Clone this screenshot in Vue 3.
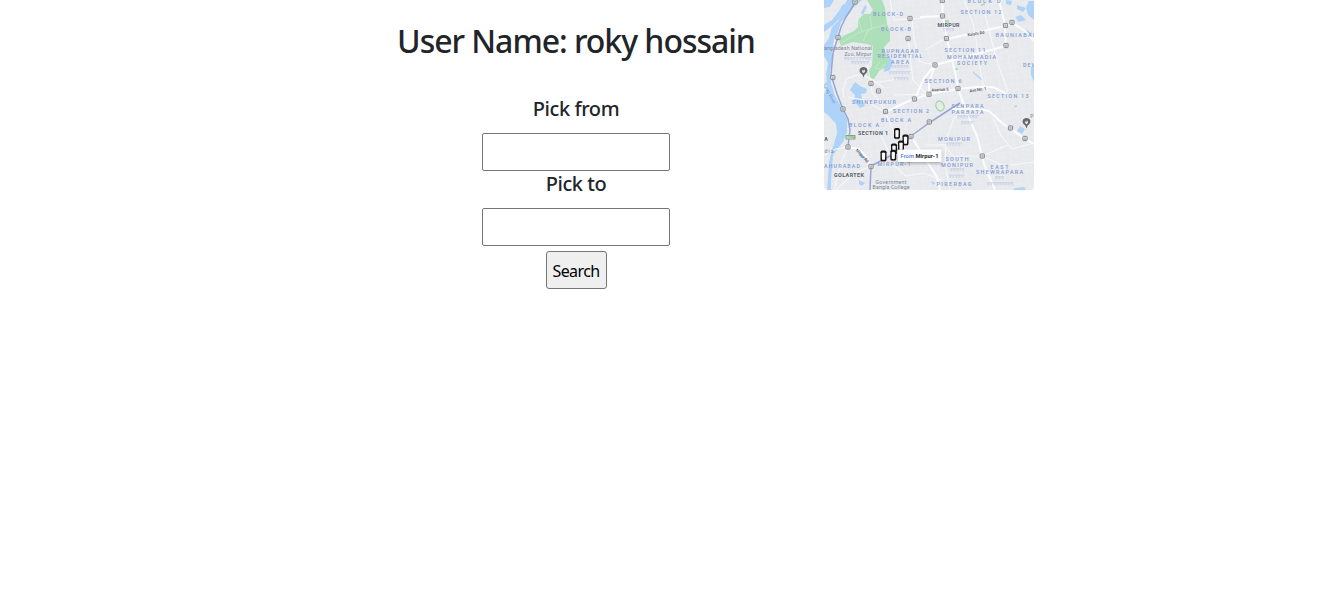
<script setup>
import { ref } from 'vue'

const userName = ref('roky hossain')
const from = ref('')
const to = ref('')

// Area names: [text, centre x, baseline y, width]
const areas = [
  ['BLOCK-D', 64, 16, 30], ['BLOCK-B', 72, 31, 30],
  ['RUPNAGAR', 76, 52.5, 37], ['RESIDENTIAL', 76, 58.3, 45], ['AREA', 76, 64, 18],
  ['BLOCK D', 160, 3, 33], ['SECTION 12', 157, 14.3, 41],
  ['BAUNIABAD', 192, 37, 41], ['SECTION 11', 141, 52.3, 41],
  ['MOHAMMADIA', 147.5, 59.2, 49], ['SOCIETY', 148, 64.5, 30],
  ['DEV', 205, 67, 12], ['SECTION 6', 119, 82.8, 37], ['SECTION 13', 184, 98, 41],
  ['SHINEPUKUR', 50, 104, 44], ['SECTION 2', 87, 113, 36],
  ['BLOCK A', 40, 126.5, 30], ['BLOCK A', 72, 122.3, 30],
  ['SENPARA', 143.5, 108, 32], ['PARBATA', 143.5, 113.6, 32],
  ['MONIPUR', 130, 140.7, 32], ['SOUTH', 133, 161, 23], ['MONIPUR', 133, 166.8, 32],
  ['EAST', 175.5, 169, 18], ['SHEWRAPARA', 175.5, 174.4, 47],
  ['PIRERBAG', 130, 186.2, 35], ['AHURABAD', 18, 168, 36], ['MIRPUR-1', 70, 166, 33]
]

// Road shield markers
const markers = [
  [31, 2], [14, 37.5], [8.8, 77.5], [86, 18.5], [84, 38.5], [47, 83.5], [54.5, 91],
  [90.5, 99], [118.3, 0.5], [118.5, 16], [122.5, 38.5], [181.5, 25.5], [188, 22.5],
  [182, 45.5], [111, 65], [134, 88.5], [105, 94.2], [19, 109], [61.5, 111.5],
  [24, 147], [47, 166.5], [87, 136.5], [105.3, 122], [186.5, 128], [201, 138.5], [158.3, 156]
]

// Secondary scripts under the area names: [x, y, width]
const scripts = [
  [67, 67, 18], [65, 73, 22], [70, 79, 14], [20, 59, 28], [27, 63, 18],
  [119, 30, 11], [133, 117, 22], [137, 123, 13], [122, 144.5, 16],
  [126, 170, 14], [125, 176.5, 16], [171, 178, 9], [163, 184, 26]
]

const cars = [[73, 133.5], [81.5, 140], [70, 149], [77, 146], [59.5, 156], [69.3, 155.3]]

const glyphs = (x, y, w) => {
  let d = `M${x} ${y - 1.4}h${w}`
  for (let i = 0; i < w - 1; i += 3) {
    d += `M${x + i} ${y - 1.2}l1.3 1.3l-1 1.3M${x + i + 1.7} ${y - 1.4}v2.6`
  }
  return d
}
</script>

<template>
  <main class="page">
    <section class="booking">
      <h2>User Name: {{ userName }}</h2>
      <form @submit.prevent>
        <h5 class="label-from">Pick from</h5>
        <input v-model="from" type="text" aria-label="Pick from" />
        <h5 class="label-to">Pick to</h5>
        <input v-model="to" type="text" aria-label="Pick to" />
        <button type="submit">Search</button>
      </form>
    </section>

    <svg class="map" viewBox="0 0 210 190" role="img" aria-label="Map">
      <defs>
        <pattern id="lanes" width="13" height="11" patternUnits="userSpaceOnUse" patternTransform="rotate(-9)">
          <path d="M0 3H13M4 0V11M9 3V11M4 8H13" />
        </pattern>
        <filter id="shadow" x="-20%" y="-40%" width="140%" height="200%">
          <feDropShadow dx="0" dy="1.5" stdDeviation="1.8" flood-color="#444" flood-opacity=".4" />
        </filter>
      </defs>
      <rect width="210" height="190" fill="#e7e9ed" />
      <rect width="210" height="190" fill="url(#lanes)" />

      <!-- rivers and lakes -->
      <g class="water">
        <path d="M23 0H38L30 7L23 16L17 22L14 32L10 40L8 51L9 61L6 71L7 83L11 96L18 108L23 119L23 132L19 142L15 147L9 148L11 140L13 133L12 124L5 116L0 112V94L3 88L2 74L4 63L0 56V45L5 38L8 27L15 20L17 11Z" />
        <path d="M0 0H10L6 7L0 8ZM0 25L8 20L15 11L19 4L23 6L18 16L8 26L0 32Z" />
        <path d="M9 146L15 147L9 155L8 168L7 179L7 190H3L4 177L5 162Z" />
        <path d="M31 82L36 86L43 89L42 93L37 94L38 99L41 106L36 108L30 101L31 95L26 90Z" />
        <path d="M53 11L60 18L56 22L51 17ZM64 56L69 61L66 70L60 72L61 61ZM49 44L54 49L49 55ZM39 15L43 7L41 5L37 13Z" />
        <path d="M182 0L188 1L187 5L182 4ZM193 5L202 8L199 12L193 9ZM205 1H210V20L204 15L202 7ZM191 17L197 15L202 20L195 22ZM202 30L208 33L207 37L202 35Z" />
        <path d="M196 126L201 129L198 134L193 131ZM207 67L210 66V82L207 75ZM191 188L200 187L202 190H189ZM35 153L41 155L42 160L36 157ZM35 180L41 183L38 186L35 184ZM107 181L111 183L109 185Z" />
      </g>
      <path class="river-edge" d="M149 72L158 80" />

      <!-- parks -->
      <g class="park">
        <path d="M43 0H58L61 8L63 24L66 31L66 41L60 47L62 55L65 63L61 68L56 70L50 79L45 78L43 73L48 66L49 46L43 44L29 42L17 46L15 40L19 36L30 31L34 27L34 20L40 14L46 14L49 10L46 5Z" />
        <path d="M121 20h4v3h-4zM157 4l4-1v2l-4 1zM131 68h3v2h-3zM190 106l3-1v2h-3z" />
      </g>
      <path class="park-path" d="M17 43L34 33L43 30L61 25M46 16L48 28L44 31L39 41M34 19L38 31M56 62L51 68L57 69L61 64" />
      <ellipse class="ring" cx="116" cy="106" rx="4" ry="5" transform="rotate(-20 116 106)" />

      <!-- streets -->
      <g class="road minor">
        <path d="M66 0L70 20L88 19L90 38L96 62L111 65M88 19L118 16M84 38L89 80L103 94M118 16L119 0M20 50L31 58L42 60L47 83L75 79" />
        <path d="M0 155L12 149L24 147L18 160L10 190M22 79L19 90L20 98M22 79L33 75L44 77L60 88M70 95L105 94M61 112L56 102L48 92L47 84M61 112L72 137L87 136" />
        <path d="M101 50L122 38M140 0L149 23L152 40L155 62L159 84L174 102M160 11L168 42L176 70L184 91M134 89L143 110L130 118L122 140L121 165L126 190" />
        <path d="M101 145L120 145L129 156L158 156L184 145M169 119L178 137L188 149L210 143M158 156L180 166L210 162M61 112L40 100L24 97M47 166L29 174L12 190M71 166L82 176L100 173L119 181M55 130L65 153L82 155" />
      </g>
      <g class="road major">
        <path d="M118 0L119 17L123 39L132 76L134 89L142 111L153 136L160 164L171 190" />
        <path d="M175 0L181 25L182 46L111 65L105 83L105 94L134 89L153 87L169 87L183 94" />
        <path d="M123 39L181 26L190 24L201 31L210 41M96 17L119 16M128 109L153 109L165 111L178 123L187 129L201 139L210 144" />
        <path d="M111 65L100 78L91 99M61 112L85 101L105 94M87 136L102 160L113 177L116 190M24 147L35 149L43 158L47 166" />
      </g>
      <path class="route" d="M31 0L29 6L22 17L17 27L14 37L9 53L7 75L13 94L19 109L24 119L26 130L24 147M47 166L68 155L87 136L105 123L128 108L136 103M47 166L46 190" />

      <path v-for="(s, i) in scripts" :key="'s' + i" class="script" :d="glyphs(...s)" />
      <g v-for="(m, i) in markers" :key="'m' + i" :transform="`translate(${m[0]} ${m[1]})`">
        <rect x="-2.1" y="-2.1" width="4.2" height="4.2" rx=".5" class="marker" />
        <path d="M-1 -.4H1M-1 .8H1" class="marker-line" />
      </g>

      <text v-for="(a, i) in areas" :key="'a' + i" class="area" :x="a[1]" :y="a[2]" :textLength="a[3]">{{ a[0] }}</text>

      <g class="place">
        <text x="24" y="50" textLength="48">angladesh National</text>
        <text x="34" y="56" textLength="27">Zoo, Mirpur</text>
        <text x="67" y="184" textLength="31">Government</text>
        <text x="67" y="189.3" textLength="37">Bangla College</text>
        <text x="5" y="153" textLength="9">dia</text>
        <text x="4" y="94" transform="rotate(62 4 94)" class="river-name">Turag River</text>
      </g>
      <g class="district">
        <text x="124.5" y="27.3" textLength="22">MIRPUR</text>
        <text x="49" y="135.4" textLength="30">SECTION 1</text>
        <text x="25" y="177.2" textLength="30">GOLARTEK</text>
        <text x="2" y="141">A</text>
      </g>
      <g class="street">
        <text x="152" y="35" textLength="17" transform="rotate(-9 152 34)">Kalshi Rd</text>
        <text x="116" y="91" textLength="17" transform="rotate(-3 116 90)">Avenue 5</text>
        <text x="154" y="91" textLength="17" transform="rotate(-10 154 90)">Ave No. 1</text>
        <text x="38" y="157" textLength="17" transform="rotate(48 38 156)">Mirpur Rd</text>
      </g>
      <rect x="21.5" y="135" width="10" height="4.4" rx=".6" fill="#7fa780" />
      <text x="26.5" y="138.5" class="road-number">N501</text>

      <!-- place pins -->
      <g v-for="(p, i) in [[39.5, 71.2], [202.5, 122.3]]" :key="'p' + i" :transform="`translate(${p[0]} ${p[1]})`">
        <path d="M0 6.2L-1.2 3.3C-6 0-3.8-4.3 0-4.3S6 0 1.2 3.3Z" class="pin" />
        <path d="M-1.7-.6h.9v-.9h.7v.9h.8v-.9h.8v2.1L0 2-1.4.9Z" fill="#dfe1e4" />
      </g>

      <g v-for="(c, i) in cars" :key="'c' + i" :transform="`translate(${c[0]} ${c[1]})`">
        <path d="M-3.5-3.7l1 .5M3.5-3.7l-1 .5" stroke="#b9a5a5" stroke-width=".6" />
        <rect x="-3" y="-5.5" width="6" height="11" rx="1.8" fill="#151515" />
        <path d="M-1.7-2.9Q0-4.3 1.7-2.9L1.5 3.4Q0 4.3-1.5 3.4Z" fill="#fafafa" />
        <path d="M-2 5.5H2" stroke="#d78383" stroke-width=".6" />
      </g>
      <rect x="74" y="149.5" width="43.5" height="12.5" rx=".7" fill="#fff" filter="url(#shadow)" />
      <text class="tip" x="76.5" y="157.7" textLength="38"><tspan class="tip-from">From</tspan> Mirpur-1</text>
      <text class="place" x="208" y="118">P</text>
    </svg>
  </main>
</template>

<style>
body { background: #fff; }
</style>

<style scoped>
.page {
  display: flex;
  align-items: flex-start;
  padding-left: 328px;
  color: #212529;
  font-family: "Segoe UI", "Noto Sans", "Open Sans", sans-serif;
}
.booking {
  width: 496px;
  box-sizing: border-box;
  padding-top: 21px;
  text-align: center;
}
h2 {
  margin: 0;
  font-size: 32px;
  line-height: 39.4px;
  font-weight: 500;
  white-space: nowrap;
  letter-spacing: -1.03px;
}
form {
  display: flex;
  flex-direction: column;
  align-items: center;
  padding-top: 36.6px;
}
h5 {
  margin: 0 0 12px;
  font-size: 20px;
  line-height: 24px;
  font-weight: 500;
  letter-spacing: -0.42px;
}
.label-to { margin-top: 1px; }
input {
  box-sizing: border-box;
  width: 188px;
  height: 38px;
  border: 1px solid #767676;
  border-radius: 2px;
  padding: 1px 2px;
  font: 16px "Noto Sans", sans-serif;
}
button {
  box-sizing: border-box;
  width: 61px;
  height: 38px;
  margin-top: 5px;
  padding: 1px 0 0;
  border: 1px solid #767676;
  border-radius: 3px;
  background: #efefef;
  color: #000;
  font: 16px "Noto Sans", sans-serif;
  letter-spacing: -0.6px;
}
.map {
  display: block;
  width: 210px;
  height: 190px;
  border-radius: 0 0 4px 4px;
  font-family: Roboto, sans-serif;
}
#lanes path { fill: none; stroke: #eeeff2; stroke-width: .6; }
.water { fill: #aed3f8; }
.river-edge { fill: none; stroke: #b4d2f4; stroke-width: 1.3; }
.river-name { font-size: 4.6px; fill: #7196cc; }
.park { fill: #addfb8; }
.park-path { fill: none; stroke: #cbebd1; stroke-width: .8; }
.ring { fill: none; stroke: #a5dab0; stroke-width: 1.5; }
.road { fill: none; stroke-linejoin: round; }
.minor { stroke: #f6f7f9; stroke-width: 1.1; }
.major { stroke: #fbfcfd; stroke-width: 2; }
.route { fill: none; stroke: #98a6d2; stroke-width: 1.5; stroke-linejoin: round; }
.script { fill: none; stroke: #b3c3e2; stroke-width: .45; }
.marker { fill: #e4e5e7; stroke: #7e8085; stroke-width: .9; }
.marker-line { stroke: #888; stroke-width: .6; }
.area { font-size: 5.4px; font-weight: 500; fill: #829bd4; text-anchor: middle; }
.place { font-size: 5.2px; fill: #7d8592; text-anchor: middle; }
.place .river-name { font-size: 4.6px; fill: #7196cc; }
.district { font-size: 5.4px; font-weight: 700; fill: #59616d; text-anchor: middle; }
.street { font-size: 4.2px; font-weight: 500; fill: #54585e; text-anchor: middle; }
.road-number { font-size: 3.5px; fill: #fff; text-anchor: middle; }
.pin { fill: #65676b; }
.tip { font-size: 5.8px; font-weight: 700; fill: #25282d; }
.tip-from { fill: #477ee9; font-weight: 500; }
</style>
